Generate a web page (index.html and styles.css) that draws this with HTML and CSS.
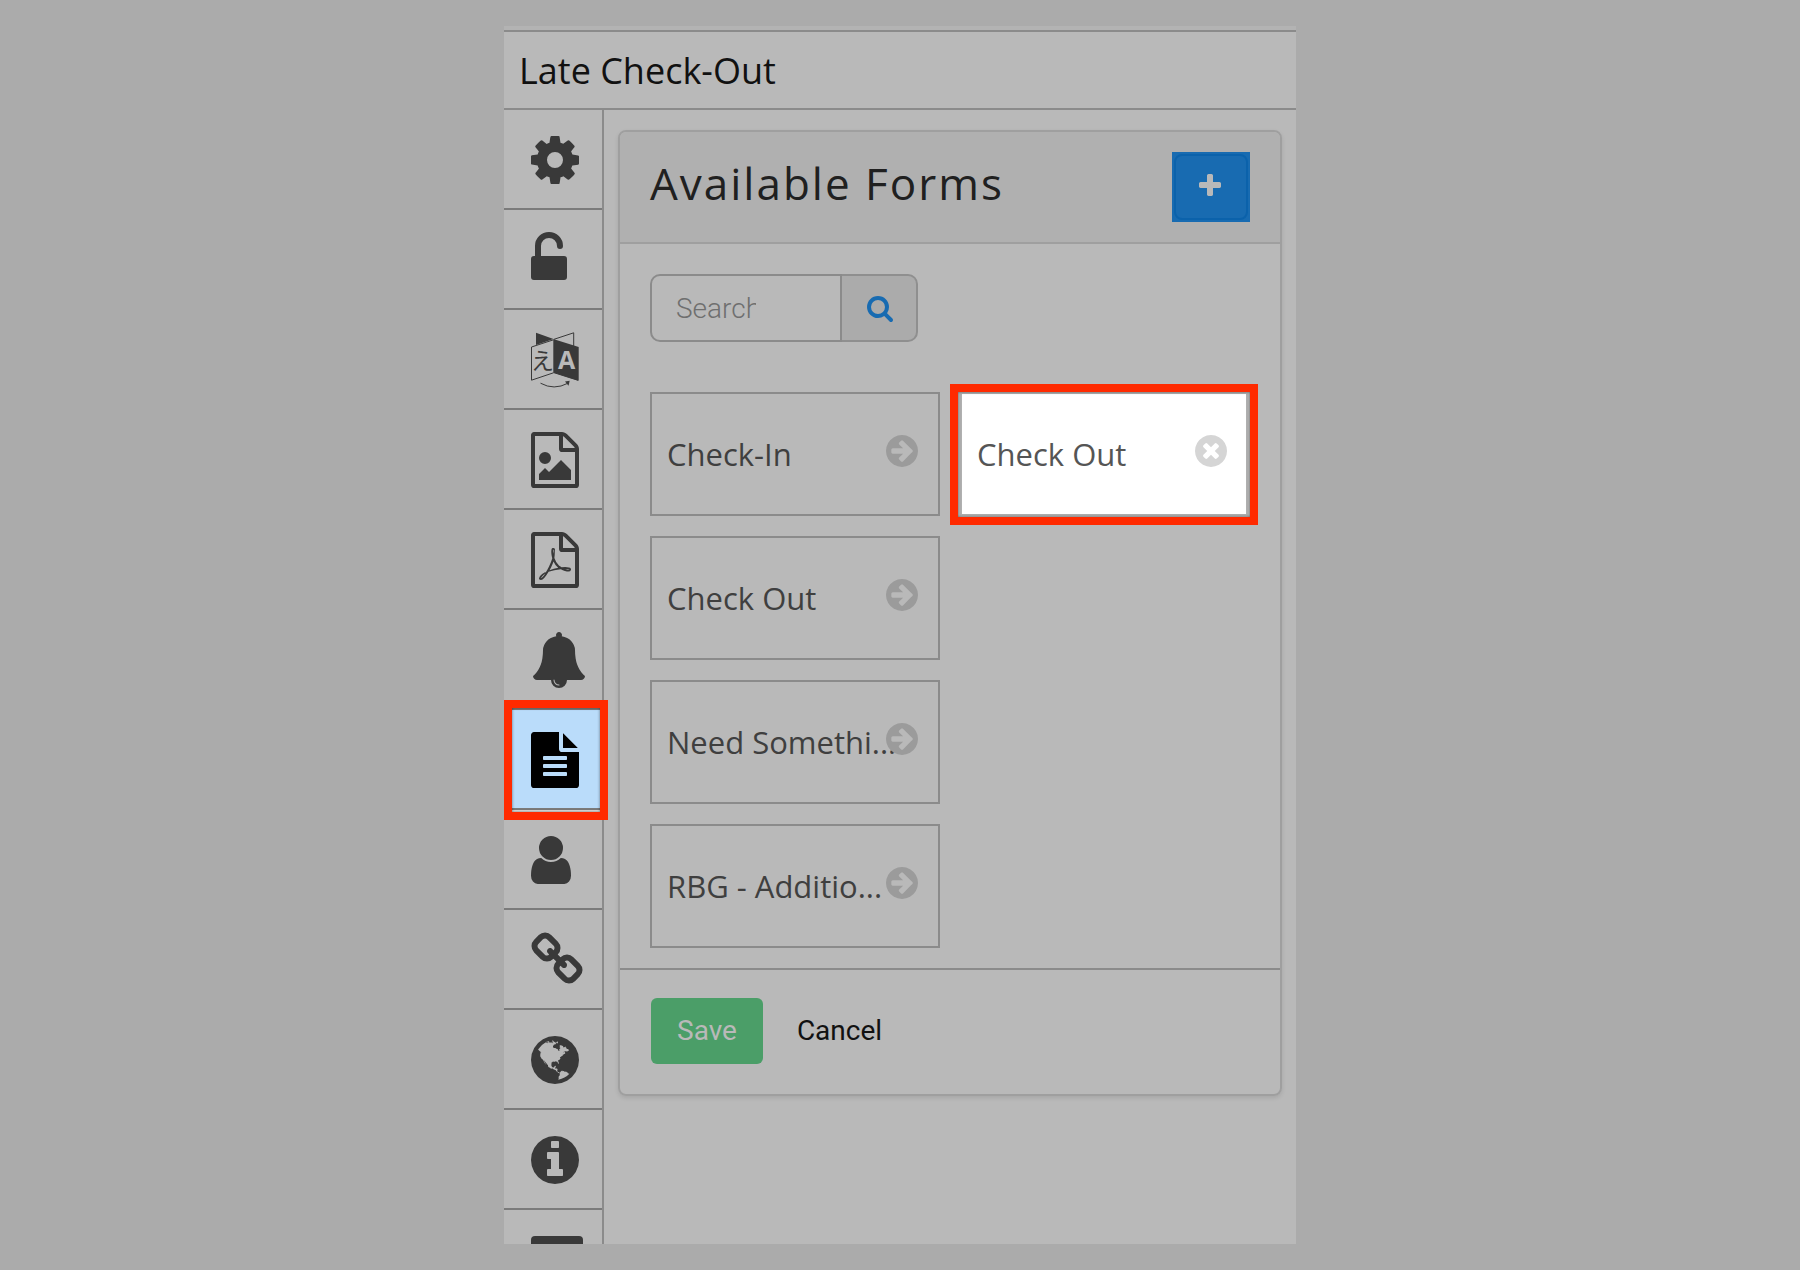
FILE: index.html
```html
<!DOCTYPE html>
<html lang="en">
<head>
    <meta charset="UTF-8">
    <title>Late Check-Out</title>
    <link rel="stylesheet" href="styles.css">
</head>
<body>
<div class="window">
    <header class="window-header">
        <h1>Late Check-Out</h1>
    </header>
    <div class="window-body">
        <nav class="sidebar">
            <a href="#settings" aria-label="Settings">
                <svg viewBox="128 0 1792 1792"><path d="M1152 896q0-106-75-181t-181-75-181 75-75 181 75 181 181 75 181-75 75-181zm512-109v222q0 12-8 23t-20 13l-185 28q-19 54-39 91 35 50 107 138 10 12 10 25t-9 23q-27 37-99 108t-94 71q-12 0-26-9l-138-108q-44 23-91 38-16 136-29 186-7 28-36 28h-222q-14 0-24.5-8.5t-11.5-21.5l-28-184q-49-16-90-37l-141 107q-10 9-25 9-14 0-25-11-126-114-165-168-7-10-7-23 0-12 8-23 15-21 51-66.5t54-70.5q-27-50-41-99l-183-27q-13-2-21-12.5t-8-23.5v-222q0-12 8-23t19-13l186-28q14-46 39-92-40-57-107-138-10-12-10-24 0-10 9-23 26-36 98.5-107.5t94.5-71.5q13 0 26 10l138 107q44-23 91-38 16-136 29-186 7-28 36-28h222q14 0 24.5 8.5t11.5 21.5l28 184q49 16 90 37l142-107q9-9 24-9 13 0 25 10 129 119 165 170 7 8 7 22 0 12-8 23-15 21-51 66.5t-54 70.5q26 50 41 98l183 28q13 2 21 12.5t8 23.5z"/></svg>
            </a>
            <a href="#access" aria-label="Access">
                <svg viewBox="0 0 56 56"><path d="M3 24h1V14a14 14 0 0 1 28 0a3 3 0 0 1-6 0a8 8 0 0 0-16 0v10h23a3 3 0 0 1 3 3v18a3 3 0 0 1-3 3H3a3 3 0 0 1-3-3V27a3 3 0 0 1 3-3z"/></svg>
            </a>
            <a href="#translations" aria-label="Translations">
                <svg viewBox="0 0 56 56">
                    <path d="M5 .7L22.5 7 5 13z"/>
                    <path class="line" d="M23 7.3L42.7.8V14M.5 15L22.8 7.7V40.7L.5 48.2zM23 40.7l24 7.6"/>
                    <path d="M23 7.3L47.7 15v33.7L23 40.7z"/>
                    <text class="glyph-left" x="0" y="37">え</text>
                    <text class="glyph-right" x="27" y="37">A</text>
                    <path class="line" d="M9.5 51.2q13.500 7.500 27.500 0"/>
                    <path d="M34 49.500l4.700-.8-1.200 5z"/>
                </svg>
            </a>
            <a href="#images" aria-label="Images">
                <svg viewBox="128 0 1792 1792"><path d="M1596 380q28 28 48 76t20 88v1152q0 40-28 68t-68 28h-1344q-40 0-68-28t-28-68v-1600q0-40 28-68t68-28h896q40 0 88 20t76 48zm-444-244v376h376q-10-29-22-41l-313-313q-12-12-41-22zm384 1528v-1024h-416q-40 0-68-28t-28-68v-416h-768v1536h1280zm-128-448v320h-1024v-192l192-192 128 128 384-384zm-832-192q-80 0-136-56t-56-136 56-136 136-56 136 56 56 136-56 136-136 56z"/></svg>
            </a>
            <a href="#documents" aria-label="Documents">
                <svg viewBox="128 0 1792 1792"><path d="M1596 380q28 28 48 76t20 88v1152q0 40-28 68t-68 28h-1344q-40 0-68-28t-28-68v-1600q0-40 28-68t68-28h896q40 0 88 20t76 48zm-444-244v376h376q-10-29-22-41l-313-313q-12-12-41-22zm384 1528v-1024h-416q-40 0-68-28t-28-68v-416h-768v1536h1280zm-514-593q33 26 84 56 59-7 117-7 147 0 177 49 16 22 2 52 0 1-1 2l-2 2v1q-6 38-71 38-48 0-115-20t-130-53q-221 24-392 83-153 262-242 262-15 0-28-7l-24-12q-1-1-6-5-10-10-6-36 9-40 56-91.5t132-96.500q14-9 23 6 2 2 2 4 52-85 107-197 68-136 104-262-24-82-30.500-159.500t6.500-127.500q11-40 42-40h22q23 0 35 15 18 21 9 68-2 6-4 8 1 3 1 8v30q-2 123-14 192 55 164 146 238zm-576 411q52-24 137-158-51 40-87.500 84t-49.500 74zm398-920q-15 42-2 132 1-7 7-44 0-3 7-43 1-4 4-8-1-1-1-2-1-2-1-3-1-22-13-36 0 1-1 2v2zm-124 661q135-54 284-81-2-1-13-9.500t-16-13.500q-76-67-127-176-27 86-83 197-30 56-45 83zm646-16q-24-24-140-24 76 28 124 28 14 0 18-1 0-1-2-3z"/></svg>
            </a>
            <a href="#notifications" aria-label="Notifications">
                <svg viewBox="0 0 1792 1792"><path d="M912 1696q0-16-16-16-59 0-101.500-42.500t-42.500-101.500q0-16-16-16t-16 16q0 73 51.500 124.500t124.500 51.500q16 0 16-16zm816-288q0 52-38 90t-90 38h-448q0 106-75 181t-181 75-181-75-75-181h-448q-52 0-90-38t-38-90q50-42 91-88t85-119.500 74.500-158.500 50-206 19.500-260q0-152 117-282.500t307-158.500q-8-19-8-39 0-40 28-68t68-28 68 28 28 68q0 20-8 39 190 28 307 158.500t117 282.500q0 139 19.500 260t50 206 74.500 158.500 85 119.500 91 88z"/></svg>
            </a>
            <a href="#forms" class="active" aria-label="Forms">
                <svg viewBox="128 0 1792 1792"><path d="M1596 476q14 14 28 36h-472v-472q22 14 36 28zm-476 164h544v1056q0 40-28 68t-68 28h-1344q-40 0-68-28t-28-68v-1600q0-40 28-68t68-28h800v544q0 40 28 68t68 28zm160 736v-64q0-14-9-23t-23-9h-704q-14 0-23 9t-9 23v64q0 14 9 23t23 9h704q14 0 23-9t9-23zm0-256v-64q0-14-9-23t-23-9h-704q-14 0-23 9t-9 23v64q0 14 9 23t23 9h704q14 0 23-9t9-23zm0-256v-64q0-14-9-23t-23-9h-704q-14 0-23 9t-9 23v64q0 14 9 23t23 9h704q14 0 23-9t9-23z"/></svg>
            </a>
            <a href="#guests" aria-label="Guests">
                <svg viewBox="256 0 1792 1792"><path d="M1536 1399q0 109-62.500 187t-150.500 78h-854q-88 0-150.500-78t-62.500-187q0-85 8.500-160.500t31.500-152 58.500-131 94-89 134.500-34.500q131 128 313 128t313-128q76 0 134.500 34.500t94 89 58.500 131 31.500 152 8.500 160.500zm-256-887q0 159-112.500 271.500t-271.500 112.500-271.500-112.500-112.500-271.500 112.500-271.500 271.500-112.500 271.500 112.500 112.500 271.500z"/></svg>
            </a>
            <a href="#links" aria-label="Links">
                <svg viewBox="64 0 1792 1792"><path d="M1520 1216q0-40-28-68l-208-208q-28-28-68-28-42 0-72 32 3 3 19 18.500t21.500 21.500 15 19 13 25.500 3.500 27.500q0 40-28 68t-68 28q-15 0-27.500-3.500t-25.500-13-19-15-21.500-21.500-18.500-19q-33 31-33 73 0 40 28 68l206 207q27 27 68 27 40 0 68-26l147-146q28-28 28-67zm-703-705q0-40-28-68l-206-207q-28-28-68-28-39 0-68 27l-147 146q-28 28-28 67 0 40 28 68l208 208q27 27 68 27 42 0 72-31-3-3-19-18.500t-21.500-21.500-15-19-13-25.500-3.500-27.500q0-40 28-68t68-28q15 0 27.500 3.500t25.500 13 19 15 21.500 21.500 18.500 19q33-31 33-73zm895 705q0 120-85 203l-147 146q-83 83-203 83-121 0-204-85l-206-207q-83-83-83-203 0-123 88-209l-88-88q-86 88-208 88-120 0-204-84l-208-208q-84-84-84-204t85-203l147-146q83-83 203-83 121 0 204 85l206 207q83 83 83 203 0 123-88 209l88 88q86-88 208-88 120 0 204 84l208 208q84 84 84 204z"/></svg>
            </a>
            <a href="#web" aria-label="Web">
                <svg viewBox="128 0 1792 1792"><path d="M896 128q209 0 385.500 103t279.500 279.500 103 385.500-103 385.500-279.500 279.500-385.500 103-385.500-103-279.500-279.500-103-385.500 103-385.500 279.500-279.500 385.500-103zm274 521q-2 1-9.500 9.500t-13.500 9.500q2 0 4.500-5t5-11 3.500-7q6-7 22-15 14-6 52-12 34-8 51 11-2-2 9.500-13t14.500-12q3-2 15-4.500t15-7.500l2-22q-12 1-17.500-7t-6.500-21q0 2-6 8 0-7-4.500-8t-11.500 1-9 1q-10-3-15-7.500t-8-16.500-4-15q-2-5-9.500-11t-9.500-10q-1-2-2.500-5.500t-3-6.500-4-5.500-5.500-2.500-7 5-7.500 10-4.500 5q-3-2-6-1.500t-4.500 1-4.500 3-5 3.500q-3 2-8.500 3t-8.500 2q15-5-1-11-10-4-16-3 9-4 7.500-12t-8.500-14h5q-1-4-8.500-8.500t-17.500-8.500-13-6q-8-5-34-9.500t-33-.5q-5 6-4.500 10.500t4 14 3.500 12.500q1 6-5.500 13t-6.500 12q0 7 14 15.500t10 21.500q-3 8-16 16t-16 12q-5 8-1.500 18.500t10.500 16.500q2 2 1.500 4t-3.500 4.500-5.500 4-6.500 3.500l-3 2q-11 5-20.500-6t-13.500-26q-7-25-16-30-23-8-29 1-5-13-41-26-25-9-58-4 6-1 0-15-7-15-19-12 3-6 4-17.500t1-13.500q3-13 12-23 1-1 7-8.500t9.500-13.500.5-6q35 4 50-11 5-5 11.500-17t10.500-17q9-6 14-5.500t14.500 5.500 14.500 5q14 1 15.500-11t-7.500-20q12 1 3-17-4-7-8-9-12-4-27 5-8 4 2 8-1-1-9.500 10.500t-16.500 17.500-16-5q-1-1-5.500-13.500t-9.500-13.500q-8 0-16 15 3-8-11-15t-24-8q19-12-8-27-7-4-20.500-5t-19.500 4q-5 7-5.500 11.500t5 8 10.500 5.500 11.500 4 8.500 3q14 10 8 14-2 1-8.500 3.500t-11.500 4.500-6 4q-3 4 0 14t-2 14q-5-5-9-17.500t-7-16.500q7 9-25 6l-10-1q-4 0-16 2t-20.500 1-13.500-8q-4-8 0-20 1-4 4-2-4-3-11-9.500t-10-8.500q-46 15-94 41 6 1 12-1 5-2 13-6.500t10-5.500q34-14 42-7l5-5q14 16 20 25-7-4-30-1-20 6-22 12 7 12 5 18-4-3-11.500-10t-14.500-11-15-5q-16 0-22 1-146 80-235 222 7 7 12 8 4 1 5 9t2.500 11 11.500-3q9 8 3 19 1-1 44 27 19 17 21 21 3 11-10 18-1-2-9-9t-9-4q-3 5 .5 18.500t10.500 12.500q-7 0-9.500 16t-2.500 35.500-1 23.500l2 1q-3 12 5.500 34.500t21.500 19.500q-13 3 20 43 6 8 8 9 3 2 12 7.500t15 10 10 10.500q4 5 10 22.500t14 23.500q-2 6 9.500 20t10.500 23q-1 0-2.500 1t-2.500 1q3 7 15.500 14t15.500 13q1 3 2 10t3 11 8 2q2-20-24-62-15-25-17-29-3-5-5.500-15.500t-4.500-14.500q2 0 6 1.500t8.500 3.500 7.500 4 2 3q-3 7 2 17.500t12 18.500 17 19 12 13q6 6 14 19.500t0 13.500q9 0 20 10t17 20q5 8 8 26t5 24q2 7 8.500 13.500t12.500 9.500l16 8 13 7q5 2 18.500 10.500t21.500 11.500q10 4 16 4t14.500-2.500 13.500-3.500q15-2 29 15t21 21q36 19 55 11-2 1 .5 7.500t8 15.500 9 14.500 5.500 8.500q5 6 18 15t18 15q6-4 7-9-3 8 7 20t18 10q14-3 14-32-31 15-49-18 0-1-2.500-5.500t-4-8.500-2.500-8.500 0-7.500 5-3q9 0 10-3.500t-2-12.500-4-13q-1-8-11-20t-12-15q-5 9-16 8t-16-9q0 1-1.500 5.500t-1.500 6.500q-13 0-15-1 1-3 2.500-17.500t3.500-22.500q1-4 5.500-12t7.500-14.500 4-12.500-4.500-9.500-17.500-2.500q-19 1-26 20-1 3-3 10.500t-5 11.500-9 7q-7 3-24 2t-24-5q-13-8-22.500-29t-9.500-37q0-10 2.500-26.500t3-25-5.500-24.500q3-2 9-9.500t10-10.500q2-1 4.500-1.500t4.500 0 4-1.500 3-6q-1-1-4-3-3-3-4-3 7 3 28.500-1.500t27.500 1.500q15 11 22-2 0-1-2.500-9.500t-.5-13.500q5 27 29 9 3 3 15.500 5t17.500 5q3 2 7 5.500t5.500 4.500 5-.5 8.500-6.500q10 14 12 24 11 40 19 44 7 3 11 2t4.500-9.500 0-14-1.500-12.500l-1-8v-18l-1-8q-15-3-18.500-12t1.500-18.500 15-18.500q1-1 8-3.500t15.500-6.500 12.500-8q21-19 15-35 7 0 11-9-1 0-5-3t-7.500-5-4.500-2q9-5 2-16 5-3 7.500-11t7.500-10q9 12 21 2 7-8 1-16 5-7 20.500-10.500t18.500-9.500q7 2 8-2t1-12 3-12q4-5 15-9t13-5l17-11q3-4 0-4 18 2 31-11 10-11-6-20 3-6-3-9.500t-15-5.500q3-1 11.500-.5t10.500-1.500q15-10-7-16-17-5-43 12zm-163 877q206-36 351-189-3-3-12.500-4.500t-12.500-3.500q-18-7-24-8 1-7-2.500-13t-8-9-12.500-8-11-7q-2-2-7-6t-7-5.500-7.500-4.500-8.500-2-10 1l-3 1q-3 1-5.500 2.500t-5.500 3-4 3 0 2.500q-21-17-36-22-5-1-11-5.500t-10.500-7-10-1.500-11.500 7q-5 5-6 15t-2 13q-7-5 0-17.500t2-18.500q-3-6-10.500-4.500t-12 4.500-11.500 8.500-9 6.500-8.500 5.500-8.500 7.500q-3 4-6 12t-5 11q-2-4-11.500-6.500t-9.500-5.500q2 10 4 35t5 38q7 31-12 48-27 25-29 40-4 22 12 26 0 7-8 20.500t-7 21.500q0 6 2 16z"/></svg>
            </a>
            <a href="#info" aria-label="Info">
                <svg viewBox="128 0 1792 1792"><path d="M1152 1376v-160q0-14-9-23t-23-9h-96v-512q0-14-9-23t-23-9h-320q-14 0-23 9t-9 23v160q0 14 9 23t23 9h96v320h-96q-14 0-23 9t-9 23v160q0 14 9 23t23 9h448q14 0 23-9t9-23zm-128-896v-160q0-14-9-23t-23-9h-192q-14 0-23 9t-9 23v160q0 14 9 23t23 9h192q14 0 23-9t9-23zm640 416q0 209-103 385.500t-279.500 279.500-385.500 103-385.500-103-279.500-279.500-103-385.500 103-385.500 279.500-279.500 385.500-103 385.500 103 279.500 279.500 103 385.500z"/></svg>
            </a>
            <a href="#billing" aria-label="Billing">
                <svg viewBox="0 0 56 56"><rect y="4" width="52" height="44" rx="4"/></svg>
            </a>
        </nav>
        <main class="content">
            <section class="panel">
                <div class="panel-header">
                    <h2>Available Forms</h2>
                    <button type="button" class="btn-add" aria-label="Add form">
                        <svg viewBox="0 0 1792 1792"><path d="M1600 736v192q0 40-28 68t-68 28h-416v416q0 40-28 68t-68 28h-192q-40 0-68-28t-28-68v-416h-416q-40 0-68-28t-28-68v-192q0-40 28-68t68-28h416v-416q0-40 28-68t68-28h192q40 0 68 28t28 68v416h416q40 0 68 28t28 68z"/></svg>
                    </button>
                </div>
                <div class="panel-body">
                    <form class="search">
                        <input type="text" placeholder="Search" aria-label="Search">
                        <button type="button" aria-label="Search forms">
                            <svg viewBox="0 0 1792 1792"><path d="M1216 832q0-185-131.500-316.500t-316.500-131.500-316.500 131.500-131.500 316.500 131.500 316.500 316.500 131.500 316.500-131.500 131.500-316.500zm512 832q0 52-38 90t-90 38q-54 0-90-38l-343-342q-179 124-399 124-143 0-273.500-55.500t-225-150-150-225-55.500-273.500 55.500-273.500 150-225 225-150 273.500-55.500 273.500 55.500 225 150 150 225 55.500 273.500q0 220-124 399l343 343q37 37 37 90z"/></svg>
                        </button>
                    </form>
                    <div class="columns">
                        <ul class="form-list">
                            <li>
                                <span>Check-In</span>
                                <button type="button" aria-label="Add Check-In"><svg viewBox="128 128 1536 1536"><use href="#arrow"/></svg></button>
                            </li>
                            <li>
                                <span>Check Out</span>
                                <button type="button" aria-label="Add Check Out"><svg viewBox="128 128 1536 1536"><use href="#arrow"/></svg></button>
                            </li>
                            <li>
                                <span>Need Somethi...</span>
                                <button type="button" aria-label="Add Need Something"><svg viewBox="128 128 1536 1536"><use href="#arrow"/></svg></button>
                            </li>
                            <li>
                                <span>RBG - Additio...</span>
                                <button type="button" aria-label="Add RBG"><svg viewBox="128 128 1536 1536"><use href="#arrow"/></svg></button>
                            </li>
                        </ul>
                        <ul class="form-list">
                            <li class="selected">
                                <span>Check Out</span>
                                <button type="button" aria-label="Remove Check Out"><svg viewBox="128 128 1536 1536"><path d="M1277 1122q0-26-19-45l-181-181 181-181q19-19 19-45 0-27-19-46l-90-90q-19-19-46-19-26 0-45 19l-181 181-181-181q-19-19-45-19-27 0-46 19l-90 90q-19 19-19 46 0 26 19 45l181 181-181 181q-19 19-19 45 0 27 19 46l90 90q19 19 46 19 26 0 45-19l181-181 181 181q19 19 45 19 27 0 46-19l90-90q19-19 19-46zm387-226q0 209-103 385.500t-279.500 279.500-385.500 103-385.500-103-279.500-279.500-103-385.500 103-385.500 279.500-279.500 385.500-103 385.500 103 279.500 279.500 103 385.500z"/></svg></button>
                            </li>
                        </ul>
                    </div>
                </div>
                <div class="panel-footer">
                    <button type="button" class="btn-save">Save</button>
                    <button type="button" class="btn-cancel">Cancel</button>
                </div>
            </section>
        </main>
    </div>
</div>

<!-- Shared arrow icon -->
<svg class="defs" aria-hidden="true">
    <defs>
        <path id="arrow" d="M1413 896q0-27-18-45l-91-91-362-362q-18-18-45-18t-45 18l-91 91q-18 18-18 45t18 45l189 189h-502q-26 0-45 19t-19 45v128q0 26 19 45t45 19h502l-189 189q-19 19-19 45t19 45l91 91q18 18 45 18t45-18l362-362 91-91q18-18 18-45zm251 0q0 209-103 385.500t-279.500 279.500-385.500 103-385.500-103-279.500-279.500-103-385.500 103-385.500 279.500-279.500 385.500-103 385.500 103 279.500 279.500 103 385.500z"/>
    </defs>
</svg>
</body>
</html>
```

FILE: styles.css
```css
*, *::after {
    margin: 0;
    padding: 0;
    box-sizing: border-box;
}

body {
    background: #ababab;
    font-family: 'Open Sans', sans-serif;
    color: #111111;
}

button {
    border: none;
    background: none;
    font-family: Roboto, sans-serif;
    font-size: 28px;
    cursor: pointer;
}

svg {
    display: block;
    fill: currentColor;
}

.defs {
    position: absolute;
    width: 0;
    height: 0;
}

/* Window */
.window {
    display: flex;
    flex-direction: column;
    width: 44%;
    min-width: 700px;
    height: calc(100vh - 52px);
    margin: 26px auto;
    background: #b9b9b9;
    border-top: 4px solid #b3b3b3;
    overflow: hidden;
}

.window-header {
    flex: none;
    padding: 2px 15px 0;
    border-top: 2px solid #8b8b8b;
    border-bottom: 2px solid #8b8b8b;
}

.window-header h1 {
    font-size: 36px;
    font-weight: 400;
    line-height: 74px;
}

.window-body {
    display: flex;
    flex: 1;
    min-height: 0;
}

/* Sidebar */
.sidebar {
    flex: none;
    width: 100px;
    border-right: 2px solid #8b8b8b;
}

.sidebar a {
    display: block;
    height: 100px;
    padding: 22px 0 0 27px;
    border-bottom: 2px solid #7b7b7b;
    color: #393939;
}

.sidebar svg {
    width: 56px;
    height: 56px;
}

.sidebar .line {
    fill: none;
    stroke: currentColor;
}

.glyph-left {
    font-family: 'Noto Sans CJK JP', sans-serif;
    font-size: 23px;
}

.glyph-right {
    font-family: 'Open Sans', sans-serif;
    font-size: 25px;
    font-weight: 700;
    fill: #b9b9b9;
}

.sidebar .active {
    position: relative;
    z-index: 1;
    background: #badcfa;
    color: #000000;
    box-shadow: 0 2px #dedede;
}

/* Red frames around the highlighted items */
.active::after, .selected::after {
    content: "";
    position: absolute;
    border: 8px solid #ff2a00;
    box-shadow: inset 0 0 3px rgba(0, 0, 0, 0.5);
    pointer-events: none;
}

.active::after {
    top: -10px;
    left: 0;
    width: 104px;
    height: 120px;
}

.selected::after {
    top: -10px;
    right: -12px;
    bottom: -11px;
    left: -12px;
}

/* Panel */
.content {
    flex: 1;
    padding: 20px 14px;
}

.panel {
    border: 2px solid #9f9f9f;
    border-radius: 8px;
    box-shadow: 0 2px 4px rgba(0, 0, 0, 0.1);
}

.panel-header {
    display: flex;
    justify-content: space-between;
    align-items: flex-start;
    padding: 20px 30px;
    background: #b0b0b0;
    border-bottom: 2px solid #9f9f9f;
    border-radius: 6px 6px 0 0;
}

.panel-header h2 {
    font-size: 44px;
    font-weight: 400;
    line-height: 62px;
    letter-spacing: 2px;
    color: #202020;
}

.btn-add {
    width: 78px;
    height: 70px;
    padding: 2px;
    background: #186bb1;
    color: #b9b9b9;
}

.btn-add svg {
    width: 74px;
    height: 66px;
    padding: 16px 21px 18px 19px;
    border: 2px solid #0b62ab;
    border-radius: 8px;
}

.panel-body {
    padding: 30px 30px 20px;
}

.search {
    display: flex;
    width: 268px;
    height: 68px;
    margin-bottom: 50px;
}

.search input {
    flex: 1;
    min-width: 0;
    padding: 0 84px 0 24px;
    border: 2px solid #8b8b8b;
    border-radius: 10px 0 0 10px;
    background: transparent;
    font-family: Roboto, sans-serif;
    font-size: 28px;
    font-weight: 300;
}

.search input::placeholder {
    color: #6f6f6f;
}

.search button {
    width: 76px;
    padding-left: 24px;
    border: 2px solid #8f8f8f;
    border-left: none;
    border-radius: 0 10px 10px 0;
    background: #ababab;
    color: #186bb1;
}

.search button svg {
    width: 28px;
    height: 28px;
}

/* Form lists */
.columns {
    display: grid;
    grid-template-columns: 1fr 1fr;
    gap: 20px;
}

.form-list {
    list-style: none;
    display: flex;
    flex-direction: column;
    gap: 20px;
}

.form-list li {
    position: relative;
    height: 124px;
    padding: 0 15px;
    border: 2px solid #8b8b8b;
    color: #3f3f3f;
    font-size: 31px;
    line-height: 120px;
    white-space: nowrap;
}

.form-list button {
    position: absolute;
    top: 41px;
    right: 20px;
    color: #9b9b9b;
}

.form-list svg {
    width: 32px;
    height: 32px;
}

.form-list .selected {
    margin-right: 2px;
    background: #ffffff;
    border-color: #b0b0b0;
    color: #555555;
}

.form-list .selected button {
    right: 19px;
    color: #d5d5d5;
}

/* Footer */
.panel-footer {
    display: flex;
    gap: 8px;
    padding: 28px 31px 30px;
    border-top: 2px solid #8b8b8b;
}

.btn-save, .btn-cancel {
    height: 66px;
    padding: 0 26px 2px;
    border-radius: 6px;
}

.btn-save {
    background: #4b9e68;
    color: #b9b9b9;
}

.btn-cancel {
    color: #111111;
}
```
